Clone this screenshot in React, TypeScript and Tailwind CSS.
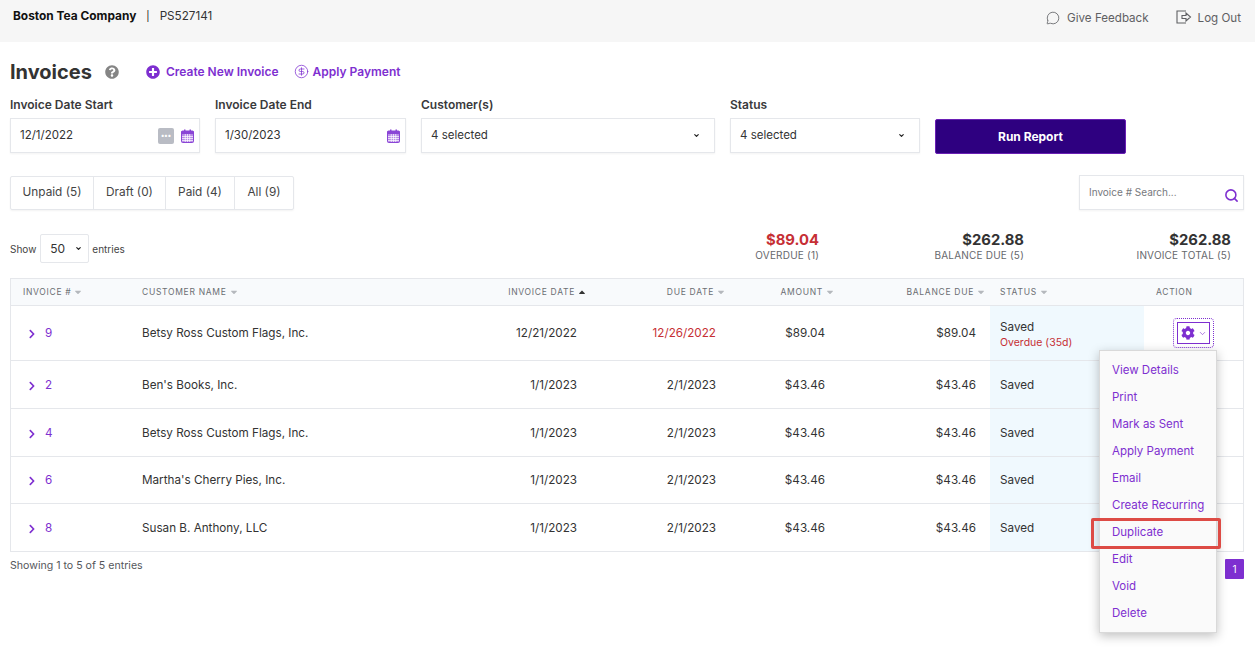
import { CircleDollarSign, MessageCircle, Search, ChevronDown } from "lucide-react";
import { FaCaretDown, FaCaretUp, FaChevronRight, FaCog, FaPlusCircle, FaQuestionCircle } from "react-icons/fa";

const tabs = [
  { label: "Unpaid (5)", width: "w-[83px]" },
  { label: "Draft (0)", width: "w-[72px]" },
  { label: "Paid (4)", width: "w-[69px]" },
  { label: "All (9)", width: "w-[58px]" },
];
const menuItems = [
  "View Details",
  "Print",
  "Mark as Sent",
  "Apply Payment",
  "Email",
  "Create Recurring",
  "Duplicate",
  "Edit",
  "Void",
  "Delete",
];
const rows = [
  { id: "9", name: "Betsy Ross Custom Flags, Inc.", date: "12/21/2022", due: "12/26/2022", amount: "$89.04", overdue: true },
  { id: "2", name: "Ben's Books, Inc.", date: "1/1/2023", due: "2/1/2023", amount: "$43.46" },
  { id: "4", name: "Betsy Ross Custom Flags, Inc.", date: "1/1/2023", due: "2/1/2023", amount: "$43.46" },
  { id: "6", name: "Martha's Cherry Pies, Inc.", date: "1/1/2023", due: "2/1/2023", amount: "$43.46" },
  { id: "8", name: "Susan B. Anthony, LLC", date: "1/1/2023", due: "2/1/2023", amount: "$43.46" },
];
const rowHeights = ["h-[55px]", "h-[48px]", "h-[48px]", "h-[47px]", "h-[47px]"];
const gridCols = "grid grid-cols-[120px_309px_150px_140px_110px_150px_154px_99px]";

function CalendarIcon() {
  return (
    <svg width="13" height="14" viewBox="0 0 13 14" className="shrink-0">
      <rect x="0.5" y="2" width="12" height="11.5" rx="1" fill="#b78ae6" stroke="#8a45d6" />
      <rect x="0.5" y="2" width="12" height="3" fill="#8a45d6" />
      <rect x="3" y="0.5" width="1.5" height="3" fill="#8a45d6" />
      <rect x="8.5" y="0.5" width="1.5" height="3" fill="#8a45d6" />
      <path d="M4.300 5v8M6.500 5v8M8.700 5v8M1 7.500h11M1 9.500h11M1 11.500h11" stroke="#fff" strokeWidth="0.7" />
    </svg>
  );
}

function SortHead({ label, active }: { label: string; active?: boolean }) {
  return (
    <span className="inline-flex items-center gap-[2px]">
      {label}
      {active ? (
        <FaCaretUp className="text-[10px] text-[#333]" />
      ) : (
        <FaCaretDown className="text-[10px] text-[#b5b8bd]" />
      )}
    </span>
  );
}

function Field({ label, width, children }: { label: string; width: string; children: React.ReactNode }) {
  return (
    <div className={width}>
      <div className="mb-[5px] text-[12px] leading-[16px] font-semibold text-[#3a3a3c]">{label}</div>
      <div className="flex h-[35px] items-center border border-[#e5e7eb] bg-white pr-[5px] pl-[9px] text-[11.5px] text-[#333] shadow-[0_1px_2px_rgba(0,0,0,0.05)]">
        {children}
      </div>
    </div>
  );
}

function Stat({ value, label, red, className }: { value: string; label: string; red?: boolean; className: string }) {
  return (
    <div className={`text-right ${className}`}>
      <div className={`text-[14.800px] leading-[17px] font-bold ${red ? "text-[#c62f35]" : "text-[#333]"}`}>{value}</div>
      <div className="text-[10px] leading-[13px] tracking-[0.2px] text-[#66686c]">{label}</div>
    </div>
  );
}

export default function App() {
  return (
    <div className="min-h-[668px] bg-white font-['Inter',sans-serif] text-[#333]">
      {/* Top bar */}
      <div className="flex h-[42px] items-start justify-between bg-[#f6f6f6] pt-[9px] pr-[14px] pl-[13px]">
        <div className="flex items-center text-[11.700px] leading-[14px] text-[#333]">
          <span className="text-[11.900px] font-bold text-[#111]">Boston Tea Company</span>
          <span className="mx-[10px] text-[10px] text-[#111]">|</span>
          <span>PS527141</span>
        </div>
        <div className="mt-[1px] flex items-center text-[11.600px] leading-[14px] text-[#5f6063]">
          <MessageCircle size={14} strokeWidth={1.4} className="mr-[7px]" />
          <span>Give Feedback</span>
          <svg width="16" height="15" viewBox="0 0 16 15" fill="none" stroke="#5f6063" strokeWidth="1.1" className="mr-[6px] ml-[27px]">
            <path d="M10 1H1v12h9" />
            <path d="M6 5.500h4V3l4.500 4-4.500 4V8.500H6z" />
          </svg>
          <span>Log Out</span>
        </div>
      </div>

      <div className="relative pr-[11px] pl-[10px]">
        {/* Title */}
        <div className="flex h-[55px] items-center pt-[4px]">
          <h1 className="text-[20px] font-bold text-[#333]">Invoices</h1>
          <FaQuestionCircle className="ml-[13px] text-[14px] text-[#858585]" />
          <FaPlusCircle className="ml-[27px] text-[14px] text-[#7e2fd0]" />
          <span className="ml-[6px] text-[12px] font-semibold text-[#7e2fd0]">Create New Invoice</span>
          <CircleDollarSign size={15} strokeWidth={1.2} className="ml-[15px] text-[#7e2fd0]" />
          <span className="ml-[4px] text-[12px] font-semibold text-[#7e2fd0]">Apply Payment</span>
        </div>

        {/* Filters */}
        <div className="flex items-start gap-[15px]">
          <Field label="Invoice Date Start" width="w-[190px]">
            <span className="flex-1 pt-[1px]">12/1/2022</span>
            <span className="mr-[7px] flex h-[16px] w-[16px] items-center justify-center rounded-[2px] bg-[#b9bcc4] text-[7px] leading-none font-bold text-white">
              •••
            </span>
            <CalendarIcon />
          </Field>
          <Field label="Invoice Date End" width="w-[191px]">
            <span className="flex-1 pt-[1px]">1/30/2023</span>
            <CalendarIcon />
          </Field>
          <Field label="Customer(s)" width="w-[294px]">
            <span className="flex-1 pt-[1px]">4 selected</span>
            <ChevronDown size={7} strokeWidth={4} className="mr-[9px] text-[#222]" />
          </Field>
          <Field label="Status" width="w-[190px]">
            <span className="flex-1 pt-[1px]">4 selected</span>
            <ChevronDown size={7} strokeWidth={4} className="mr-[9px] text-[#222]" />
          </Field>
          <button className="mt-[22px] h-[35px] w-[191px] rounded-[2px] border border-[#6a1fb5] bg-[#2e0080] text-[12px] font-bold text-white">
            Run Report
          </button>
        </div>

        {/* Tabs + search */}
        <div className="mt-[22px] flex items-start justify-between">
          <div className="flex h-[34px] items-center rounded-[2px] border border-[#e5e7eb] text-[11.800px] text-[#444] shadow-[0_1px_2px_rgba(0,0,0,0.05)]">
            {tabs.map((tab) => (
              <div key={tab.label} className={`flex h-full items-center justify-center border-r border-[#e5e7eb] last:border-r-0 ${tab.width}`}>
                {tab.label}
              </div>
            ))}
          </div>
          <div className="-mt-[1px] flex h-[35px] w-[165px] items-center justify-between border border-[#e5e7eb] pr-[4px] pl-[9px] text-[10px] text-[#77797d] shadow-[0_1px_2px_rgba(0,0,0,0.05)]">
            <span>Invoice # Search...</span>
            <Search size={15} strokeWidth={2.5} className="mt-[5px] text-[#7e2fd0]" />
          </div>
        </div>

        {/* Show entries + totals */}
        <div className="mt-[23px] flex h-[45px] items-start">
          <div className="mt-[1px] flex items-center text-[10px] text-[#444]">
            <span className="pt-[1px]">Show</span>
            <div className="mr-[3px] ml-[4px] flex h-[29px] w-[49px] items-center justify-between rounded-[2px] border border-[#e5e7eb] pr-[6px] pl-[9px] text-[12px] text-[#333]">
              50
              <ChevronDown size={7} strokeWidth={4} className="text-[#222]" />
            </div>
            <span className="pt-[1px]">entries</span>
          </div>
          <div className="-mt-[1px] ml-auto flex">
            <Stat value="$89.04" label="OVERDUE (1)" red className="w-[100px]" />
            <Stat value="$262.88" label="BALANCE DUE (5)" className="ml-[95px] w-[110px]" />
            <Stat value="$262.88" label="INVOICE TOTAL (5)" className="mr-[13px] ml-[97px] w-[110px]" />
          </div>
        </div>

        {/* Table */}
        <div className="border border-[#e5e7eb]">
          <div className={`${gridCols} h-[27px] items-center border-b border-[#e5e7eb] bg-[#f8fafc] text-[8.500px] tracking-[0.7px] text-[#6b6e73]`}>
            <div className="pl-[12px]"><SortHead label="INVOICE #" /></div>
            <div className="pl-[11px]"><SortHead label="CUSTOMER NAME" /></div>
            <div className="pr-[3px] text-right"><SortHead label="INVOICE DATE" active /></div>
            <div className="pr-[4px] text-right"><SortHead label="DUE DATE" /></div>
            <div className="pr-[5px] text-right"><SortHead label="AMOUNT" /></div>
            <div className="pr-[4px] text-right"><SortHead label="BALANCE DUE" /></div>
            <div className="pl-[10px]"><SortHead label="STATUS" /></div>
            <div className="pl-[12px]">ACTION</div>
          </div>
          {rows.map((row, i) => (
            <div
              key={row.id}
              className={`${gridCols} ${rowHeights[i]} items-stretch border-b border-[#e5e7eb] text-[11.700px] last:border-b-0`}
            >
              <div className="flex items-center pt-[2px] pl-[16px] text-[#7e2fd0]">
                <FaChevronRight className="text-[10px]" />
                <span className="ml-[8px]">{row.id}</span>
              </div>
              <div className="flex items-center pt-[2px] pl-[11px]">{row.name}</div>
              <div className="flex items-center justify-end pt-[2px] pr-[13px]">{row.date}</div>
              <div className={`flex items-center justify-end pt-[2px] pr-[14px] ${row.overdue ? "text-[#c62f35]" : ""}`}>{row.due}</div>
              <div className="flex items-center justify-end pt-[2px] pr-[15px]">{row.amount}</div>
              <div className="flex items-center justify-end pt-[2px] pr-[14px]">{row.amount}</div>
              <div className="flex flex-col justify-center bg-[#f0f9fe] pt-[2px] pl-[10px]">
                <span>Saved</span>
                {row.overdue && <span className="text-[10.500px] leading-[13px] text-[#c62f35]">Overdue (35d)</span>}
              </div>
              <div className="flex items-center pl-[29px]">
                {row.overdue && (
                  <div className="rounded-[4px] border border-dotted border-[#7e2fd0] p-[3px]">
                    <div className="flex h-[22px] w-[33px] items-center justify-center gap-[3px] border border-[#7e2fd0] text-[#7e2fd0]">
                      <FaCog className="text-[14px]" />
                      <ChevronDown size={9} strokeWidth={1.6} />
                    </div>
                  </div>
                )}
              </div>
            </div>
          ))}
        </div>

        {/* Footer */}
        <div className="mt-[7px] flex items-start justify-between text-[10.600px] text-[#55575b]">
          <span className="-mt-[1px]">Showing 1 to 5 of 5 entries</span>
          <span className="flex h-[20px] w-[19px] items-center justify-center rounded-[1px] bg-[#7e2fd0] text-[10px] text-white">1</span>
        </div>

        {/* Action menu */}
        <div className="absolute top-[308px] left-[1099px] w-[118px] border border-[#d9d9d9] bg-[#fafafa] pt-[6px] pb-[5px] shadow-[0_3px_10px_rgba(0,0,0,0.25)]">
          {menuItems.map((item) => (
            <div key={item} className="flex h-[27px] items-center pl-[12px] text-[11.500px] whitespace-nowrap text-[#7e2fd0]">
              {item}
            </div>
          ))}
        </div>
        <div className="absolute top-[476px] left-[1091px] h-[31px] w-[130px] rounded-[2px] border-[3px] border-[#dd4b45]" />
      </div>
    </div>
  );
}
